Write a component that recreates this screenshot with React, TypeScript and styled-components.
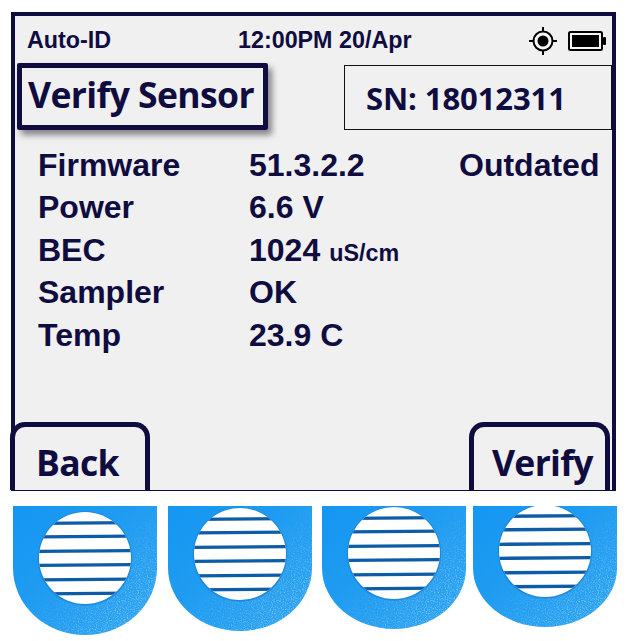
import { useId } from "react";
import styled, { createGlobalStyle } from "styled-components";

const NAVY = "#0f0c3f";

const GlobalStyle = createGlobalStyle`
  html, body {
    margin: 0;
    padding: 0;
    background: #ffffff;
  }
`;

const Page = styled.div`
  width: 627px;
  height: 641px;
  padding-top: 12px;
  box-sizing: border-box;
  overflow: hidden;
`;

const Screen = styled.div`
  width: 605px;
  height: 479px;
  margin-left: 11px;
  box-sizing: border-box;
  border: 4px solid ${NAVY};
  border-bottom-width: 1px;
  background: #f0f0f0;
  display: flex;
  flex-direction: column;
`;

const StatusBar = styled.div`
  height: 47px;
  display: flex;
  align-items: center;
  padding: 2px 6px 0 12px;
  box-sizing: border-box;
  font-family: "Liberation Sans", Arial, sans-serif;
  font-weight: 700;
  font-size: 23.3px;
  color: ${NAVY};
`;

const StatusText = styled.span<{ $width?: number }>`
  width: ${(p) => (p.$width ? `${p.$width}px` : "auto")};
`;

const StatusIcons = styled.div`
  margin-left: auto;
  display: flex;
  align-items: center;
  gap: 11px;
`;

const TitleRow = styled.div`
  display: flex;
  align-items: flex-end;
  justify-content: space-between;
  height: 67px;
  padding-left: 2px;
`;

const headingFont = `"Open Sans", "Noto Sans", sans-serif`;

const TitleBox = styled.div`
  width: 251px;
  height: 67px;
  box-sizing: border-box;
  border: 5px solid ${NAVY};
  border-radius: 2px;
  box-shadow: 4px 5px 6px rgba(60, 60, 70, 0.6);
  padding: 0 0 6px 6px;
  display: flex;
  align-items: center;
  font-family: ${headingFont};
  font-weight: 700;
  font-size: 35.5px;
  letter-spacing: -0.6px;
  color: ${NAVY};
`;

const SerialBox = styled.div`
  width: 268px;
  height: 65px;
  box-sizing: border-box;
  border: 1px solid #111111;
  padding-left: 21px;
  display: flex;
  align-items: center;
  font-family: ${headingFont};
  font-weight: 700;
  font-size: 31px;
  letter-spacing: -0.1px;
  color: ${NAVY};
`;

const Readings = styled.div`
  display: grid;
  grid-template-columns: 211px 210px auto;
  grid-auto-rows: 42.5px;
  align-items: center;
  margin-top: 14px;
  padding-left: 23px;
  font-family: "Liberation Sans", Arial, sans-serif;
  font-weight: 700;
  font-size: 32px;
  color: ${NAVY};
`;

const Unit = styled.span`
  font-size: 23.3px;
  margin-left: 9px;
`;

const SoftKeys = styled.div`
  margin-top: auto;
  display: flex;
  justify-content: space-between;
  align-items: flex-end;
  margin-left: -5px;
  margin-right: 2px;
`;

const SoftKey = styled.div<{ $width: number; $pad: number }>`
  width: ${(p) => p.$width}px;
  height: 68px;
  box-sizing: border-box;
  border: 5px solid ${NAVY};
  border-bottom: 0;
  border-radius: 15px 15px 0 0;
  background: #f0f0f0;
  padding: 13px 0 0 ${(p) => p.$pad}px;
  font-family: ${headingFont};
  font-weight: 700;
  font-size: 35.5px;
  letter-spacing: -0.7px;
  line-height: 44px;
  color: ${NAVY};
`;

const Keypad = styled.div`
  display: grid;
  grid-template-columns: 155px 154px 151px 144px;
  margin: 15px 0 0 13px;
  align-items: start;
`;

const KeySvg = styled.svg`
  display: block;
`;

function LocateIcon() {
  return (
    <svg width="28" height="28" viewBox="0 0 28 28">
      <circle cx="14" cy="14" r="9.5" fill="#f8f8f8" stroke="#000" strokeWidth="2" />
      <circle cx="14" cy="14" r="5.5" fill="#000" />
      <path d="M14 0v4M14 24v4M0 14h4M24 14h4" stroke="#000" strokeWidth="2" />
    </svg>
  );
}

function BatteryIcon() {
  return (
    <svg width="38" height="20" viewBox="0 0 38 20">
      <rect x="1" y="1" width="33" height="18" rx="1.5" fill="#f8f8f8" stroke="#000" strokeWidth="2" />
      <rect x="4" y="4" width="27" height="12" fill="#000" />
      <rect x="35" y="6" width="3" height="8" rx="1" fill="#000" />
    </svg>
  );
}

// y offset of each slit from the centre of the hole
const SLITS = [-35, -21.5, -7, 7, 21.5, 35.5];

function Key({ height, cy }: { height: number; cy: number }) {
  const id = useId();
  const outline = `M0 0H144V62A72 ${height - 62} 0 0 1 0 62Z`;
  return (
    <KeySvg width="144" height={height} viewBox={`0 0 144 ${height}`}>
      <defs>
        <linearGradient id={`${id}g`} x1="0" y1="0" x2="1" y2="1">
          <stop offset="0" stopColor="#1496f2" />
          <stop offset="1" stopColor="#2fa4f0" />
        </linearGradient>
        <linearGradient id={`${id}f`} x1="0.2" y1="0.2" x2="0.9" y2="0.9">
          <stop offset="0.35" stopColor="#000" />
          <stop offset="1" stopColor="#fff" />
        </linearGradient>
        <mask id={`${id}m`}>
          <rect width="144" height={height} fill={`url(#${id}f)`} />
        </mask>
        <filter id={`${id}n`} x="0" y="0" width="1" height="1">
          <feTurbulence type="fractalNoise" baseFrequency="0.9" numOctaves="2" seed="4" />
          <feColorMatrix values="0 0 0 0 0.62  0 0 0 0 0.85  0 0 0 0 1  1.6 0 0 0 -0.72" />
        </filter>
        <clipPath id={`${id}k`}>
          <path d={outline} />
        </clipPath>
        <clipPath id={`${id}c`}>
          <circle cx="72" cy={cy} r="46" />
        </clipPath>
      </defs>
      <path d={outline} fill={`url(#${id}g)`} />
      <g clipPath={`url(#${id}k)`} mask={`url(#${id}m)`}>
        <rect width="144" height={height} filter={`url(#${id}n)`} />
      </g>
      <g clipPath={`url(#${id}k)`}>
        <circle cx="72" cy={cy + 0.5} r="47.2" fill="#1b7fd6" opacity="0.75" />
        <circle cx="72" cy={cy} r="46" fill="#ffffff" />
        <g clipPath={`url(#${id}c)`}>
          {SLITS.map((dy) => (
            <line
              key={dy}
              x1="20"
              x2="124"
              y1={cy + dy + 0.4}
              y2={cy + dy - 0.4}
              stroke="#0d5ca8"
              strokeWidth="3.4"
            />
          ))}
        </g>
      </g>
    </KeySvg>
  );
}

export default function App() {
  return (
    <Page>
      <GlobalStyle />
      <Screen>
        <StatusBar>
          <StatusText $width={211}>Auto-ID</StatusText>
          <StatusText>12:00PM 20/Apr</StatusText>
          <StatusIcons>
            <LocateIcon />
            <BatteryIcon />
          </StatusIcons>
        </StatusBar>
        <TitleRow>
          <TitleBox>Verify Sensor</TitleBox>
          <SerialBox>SN: 18012311</SerialBox>
        </TitleRow>
        <Readings>
          <span>Firmware</span>
          <span>51.3.2.2</span>
          <span>Outdated</span>
          <span>Power</span>
          <span>6.6 V</span>
          <span />
          <span>BEC</span>
          <span>
            1024<Unit>uS/cm</Unit>
          </span>
          <span />
          <span>Sampler</span>
          <span>OK</span>
          <span />
          <span>Temp</span>
          <span>23.9 C</span>
          <span />
        </Readings>
        <SoftKeys>
          <SoftKey $width={140} $pad={21}>
            Back
          </SoftKey>
          <SoftKey $width={141} $pad={18}>
            Verify
          </SoftKey>
        </SoftKeys>
      </Screen>
      <Keypad>
        <Key height={129} cy={52} />
        <Key height={125} cy={48} />
        <Key height={123} cy={47} />
        <Key height={121} cy={45} />
      </Keypad>
    </Page>
  );
}
